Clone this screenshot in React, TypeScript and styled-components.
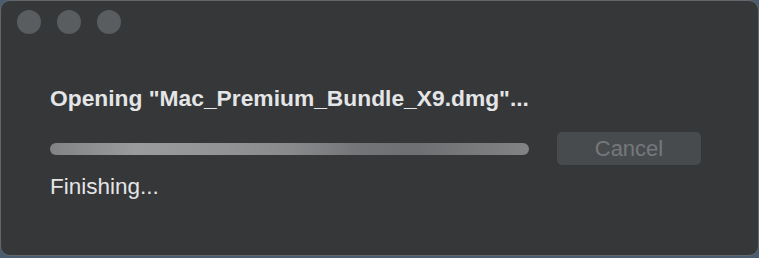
import React from "react";
import styled, { createGlobalStyle } from "styled-components";

const Global = createGlobalStyle`
  html, body { margin: 0; padding: 0; background: #4a5c70; }
  body { width: 759px; height: 258px; overflow: hidden; }
`;

const Window = styled.div`
  box-sizing: border-box;
  width: 759px;
  height: 256px;
  background: #353739;
  border: 1px solid #62676c;
  border-radius: 10px;
  font-family: "Liberation Sans", Arial, sans-serif;
  display: flex;
  flex-direction: column;
  padding: 9px 0 0 16px;
`;

const TitleBar = styled.div`
  display: flex;
  gap: 16px;
`;

const Light = styled.span`
  width: 24px;
  height: 24px;
  border-radius: 50%;
  background: #5a5d60;
`;

const Content = styled.div`
  display: flex;
  flex-direction: column;
  padding: 52px 0 0 33px;
`;

const Title = styled.div`
  font-weight: bold;
  font-size: 22.8px;
  line-height: 25px;
  color: #e4e5e6;
`;

const Row = styled.div`
  display: flex;
  align-items: center;
  gap: 28px;
  margin-top: 21px;
`;

const Bar = styled.div`
  width: 479px;
  height: 12px;
  border-radius: 6px;
  background: linear-gradient(
    90deg,
    #828385 0%,
    #9a9b9d 18%,
    #939496 35%,
    #898a8c 50%,
    #737477 65%,
    #6e6f72 76%,
    #78797b 88%,
    #828385 100%
  );
`;

const CancelButton = styled.button`
  width: 144px;
  height: 33px;
  border: none;
  border-radius: 5px;
  background: #484b4e;
  color: #75787b;
  font-family: "Liberation Sans", Arial, sans-serif;
  font-size: 22px;
  padding: 0;
  display: flex;
  align-items: center;
  justify-content: center;
`;

const Status = styled.div`
  margin-top: 9px;
  font-size: 22.5px;
  line-height: 25px;
  color: #e4e5e6;
`;

export default function App() {
  return (
    <>
      <Global />
      <Window>
        <TitleBar>
          <Light />
          <Light />
          <Light />
        </TitleBar>
        <Content>
          <Title>Opening "Mac_Premium_Bundle_X9.dmg"...</Title>
          <Row>
            <Bar />
            <CancelButton>Cancel</CancelButton>
          </Row>
          <Status>Finishing...</Status>
        </Content>
      </Window>
    </>
  );
}
